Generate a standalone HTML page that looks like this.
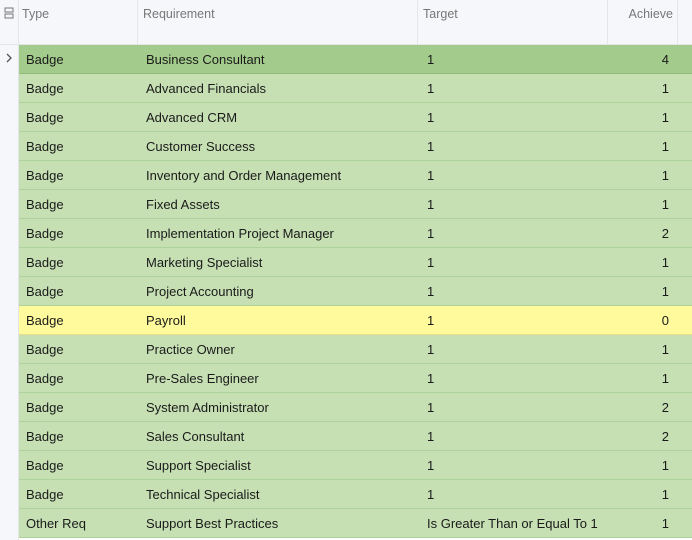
<!DOCTYPE html><html><head><style>
body{margin:0;width:692px;height:540px;overflow:hidden;background:#fff;font-family:"Liberation Sans",Arial,sans-serif;font-size:13px;color:#1a1a1a}
.h{position:absolute;top:0;left:0;width:692px;height:44px;background:#f6f7fa;border-bottom:1px solid #e2e4e8}
.h span{position:absolute;top:7px;color:#777;font-size:12.5px}
.h i{position:absolute;top:0;width:1px;height:44px;background:#e4e6ea}
.g{position:absolute;left:0;top:45px;width:18px;height:495px;background:#f6f7fa;border-right:1px solid #e2e4e8}
.r{position:absolute;left:19px;width:673px;height:28px;background:#c6e0b4;border-bottom:1px solid #aed39a}
.r span{position:absolute;top:7px}
.a{left:7px}.b{left:127px}.c{left:408px}.d{right:23px}
</style></head><body>
<div class="h">
<svg style="position:absolute;left:4px;top:7px" width="10" height="12" viewBox="0 0 10 12"><rect x="1" y="1" width="8" height="4" fill="none" stroke="#777"/><rect x="1" y="7" width="8" height="4" fill="none" stroke="#777"/></svg>
<i style="left:18px"></i><span style="left:22px">Type</span>
<i style="left:137px"></i><span style="left:143px">Requirement</span>
<i style="left:417px"></i><span style="left:423px">Target</span>
<i style="left:607px"></i><span style="right:19px">Achieve</span>
<i style="left:677px"></i>
</div>
<div class="g"><svg style="position:absolute;left:6px;top:8px" width="7" height="10"><path d="M1 1l4 4-4 4" stroke="#555" fill="none" stroke-width="1.3"/></svg></div>
<div id="rows"></div>
<script>
var d=[["Badge","Business Consultant","1","4"],["Badge","Advanced Financials","1","1"],["Badge","Advanced CRM","1","1"],["Badge","Customer Success","1","1"],["Badge","Inventory and Order Management","1","1"],["Badge","Fixed Assets","1","1"],["Badge","Implementation Project Manager","1","2"],["Badge","Marketing Specialist","1","1"],["Badge","Project Accounting","1","1"],["Badge","Payroll","1","0"],["Badge","Practice Owner","1","1"],["Badge","Pre-Sales Engineer","1","1"],["Badge","System Administrator","1","2"],["Badge","Sales Consultant","1","2"],["Badge","Support Specialist","1","1"],["Badge","Technical Specialist","1","1"],["Other Req","Support Best Practices","Is Greater Than or Equal To 1","1"]];
var h="";d.forEach(function(r,i){var s="top:"+(45+i*29)+"px;";if(i==0)s+="background:#a3cb8b;border-bottom-color:#8fbb78;";if(i==9)s+="background:#fffa9c;border-bottom-color:#e6e08a;";h+='<div class="r" style="'+s+'"><span class="a">'+r[0]+'</span><span class="b">'+r[1]+'</span><span class="c">'+r[2]+'</span><span class="d">'+r[3]+'</span></div>';});
document.getElementById("rows").innerHTML=h;
</script>
</body></html>
